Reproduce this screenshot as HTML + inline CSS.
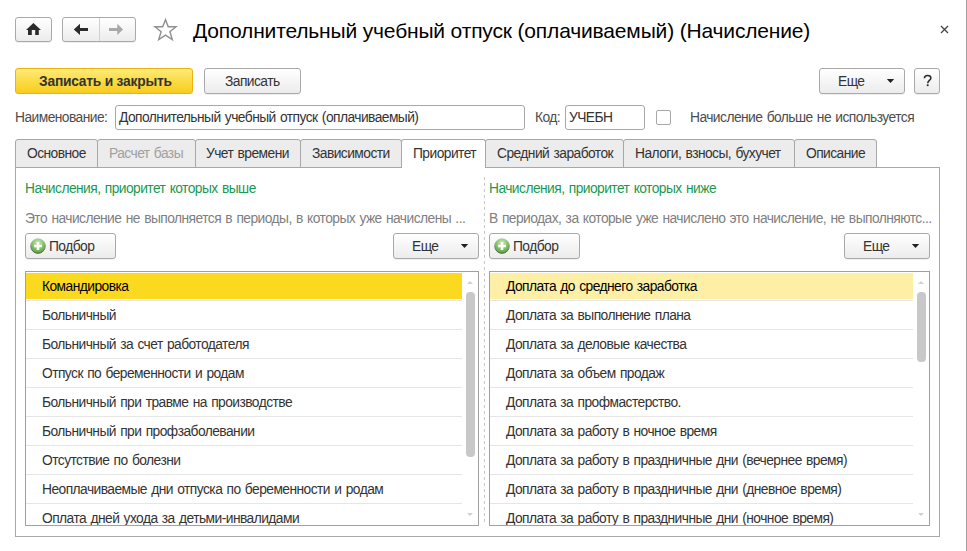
<!DOCTYPE html>
<html><head><meta charset="utf-8">
<style>
*{box-sizing:border-box;margin:0;padding:0}
html,body{width:967px;height:551px;overflow:hidden;background:#fff}
body{position:relative;font-family:"Liberation Sans",sans-serif;font-size:13.8px;letter-spacing:-0.55px;word-spacing:1px;color:#333}
.a{position:absolute;white-space:nowrap}
.btn{position:absolute;border:1px solid #a9a9a9;border-radius:3px;background:linear-gradient(#fff,#ececec);box-shadow:0 1px 0 rgba(0,0,0,0.06)}
.txt{position:absolute;white-space:nowrap;line-height:16px;padding-top:1px}
.tab{position:absolute;top:139px;height:29px;border:1px solid #a8a8a8;border-radius:3px 3px 0 0;background:#ececec;}
.tab span{position:absolute;top:6px;white-space:nowrap;line-height:16px}
.grid{position:absolute;border:1px solid #a0a0a0;background:#fff;overflow:hidden}
.row{position:absolute;left:0;height:29px;}
.row .sep{position:absolute;left:0;bottom:0;height:1px;background:#e6e6e6}
.row span{position:absolute;left:16px;top:7px;line-height:16px;white-space:nowrap}
.input{position:absolute;border:1px solid #a8a8a8;border-radius:3px;background:#fff}
.rows{position:absolute;left:0;top:0}
.row .bg{position:absolute;left:0;top:1px;right:0;height:26px}
.row .sep{top:28px;bottom:auto}
.sb{position:absolute;width:9px;background:#c8c8c8;border-radius:4px}
.up,.dn{position:absolute;width:0;height:0;border-left:3px solid transparent;border-right:3px solid transparent}
.up{border-bottom:3px solid #d0d0d0}
.dn{border-top:3px solid #d0d0d0}
</style></head><body>
<!-- right edge line -->
<div class="a" style="left:966px;top:0;width:1px;height:551px;background:#a0a0a0"></div>

<!-- home button -->
<div class="btn" style="left:15px;top:17px;width:37px;height:25px">
 <svg width="37" height="25" style="position:absolute;left:-1px;top:-1px" viewBox="0 0 37 25"><path d="M18.4 6 L26 13 H23.8 V18 H20.2 V13 H16.8 V18 H13 V13 H11 Z" fill="#2b2b2b"/></svg>
</div>
<!-- nav buttons -->
<div class="btn" style="left:62px;top:17px;width:74px;height:25px">
 <div style="position:absolute;left:36px;top:0;width:1px;height:23px;background:#cfcfcf"></div>
 <svg width="74" height="25" style="position:absolute;left:-1px;top:-1px" viewBox="0 0 74 25"><path d="M11.8 12.4 L18 6.8 V10.9 H26 V13.9 H18 V18 Z" fill="#2b2b2b"/><path d="M61 12.4 L55.3 6.8 V10.9 H47 V13.9 H55.3 V18 Z" fill="#a8a8a8"/></svg>
</div>
<!-- star -->
<svg class="a" style="left:153px;top:17px" width="25" height="25" viewBox="0 0 25 25"><path d="M12.5 2.7 L15.3 9.8 L23 9.8 L16.9 14.8 L19.3 22.6 L12.5 18.2 L5.7 22.6 L8.1 14.8 L2 9.8 L9.7 9.8 Z" fill="none" stroke="#8f8f8f" stroke-width="1.4" stroke-linejoin="miter"/></svg>
<!-- title -->
<div class="txt" style="left:193px;top:18px;font-size:21px;letter-spacing:-0.16px;word-spacing:0;line-height:24px;color:#000">Дополнительный учебный отпуск (оплачиваемый) (Начисление)</div>
<!-- close -->
<svg class="a" style="left:940px;top:25px" width="10" height="10" viewBox="0 0 10 10"><path d="M1 1 L8 8 M8 1 L1 8" stroke="#444" stroke-width="1.3"/></svg>

<!-- toolbar -->
<div class="a" style="left:15px;top:68px;width:178px;height:26px;border:1px solid #eeb20f;border-radius:3px;background:linear-gradient(#fdeb7a,#fbdc45 50%,#f8cc1e)"></div>
<div class="txt" style="left:39px;top:73px;font-weight:bold;letter-spacing:-0.22px;word-spacing:0;color:#333">Записать и закрыть</div>
<div class="btn" style="left:204px;top:68px;width:97px;height:26px"></div>
<div class="txt" style="left:225px;top:73px">Записать</div>

<div class="btn" style="left:819px;top:68px;width:86px;height:26px"></div>
<div class="txt" style="left:838px;top:73px">Еще</div>
<svg class="a" style="left:886px;top:78px" width="9" height="6" viewBox="0 0 9 6"><path d="M0.8 1 H8.2 L4.5 5 Z" fill="#222"/></svg>
<div class="btn" style="left:914px;top:68px;width:26px;height:26px"></div>
<svg class="a" style="left:914px;top:68px" width="26" height="26" viewBox="0 0 26 26"><path d="M10.4 10.3 C10.4 8.3 11.7 7.4 13.6 7.4 C15.6 7.4 16.9 8.5 16.9 10.1 C16.9 12.2 13.7 12.6 13.7 15.2" fill="none" stroke="#2b2b2b" stroke-width="1.5"/><circle cx="13.7" cy="17.2" r="1.05" fill="#2b2b2b"/></svg>

<!-- name row -->
<div class="txt" style="left:15px;top:109px;color:#4d4d4d">Наименование:</div>
<div class="input" style="left:115px;top:105px;width:410px;height:25px"></div>
<div class="txt" style="left:119px;top:109px">Дополнительный учебный отпуск (оплачиваемый)</div>
<div class="txt" style="left:535px;top:109px;color:#4d4d4d">Код:</div>
<div class="input" style="left:565px;top:105px;width:80px;height:25px"></div>
<div class="txt" style="left:569px;top:109px">УЧЕБН</div>
<div class="a" style="left:656px;top:110px;width:15px;height:15px;border:1px solid #a8a8a8;border-radius:2px;background:#fff"></div>
<div class="txt" style="left:690px;top:109px;color:#4d4d4d">Начисление больше не используется</div>

<!-- tabs -->
<div class="tab" style="left:15px;width:83px"><span style="left:11px">Основное</span></div>
<div class="tab" style="left:97px;width:99px"><span style="left:11px;color:#a0a0a0">Расчет базы</span></div>
<div class="tab" style="left:195px;width:106px"><span style="left:10px">Учет времени</span></div>
<div class="tab" style="left:300px;width:102px"><span style="left:11px">Зависимости</span></div>
<div class="tab" style="left:794px;width:83px"><span style="left:11px">Описание</span></div>
<div class="tab" style="left:623px;width:172px"><span style="left:11px">Налоги, взносы, бухучет</span></div>
<div class="tab" style="left:485px;width:139px"><span style="left:11px">Средний заработок</span></div>
<!-- panel -->
<div class="a" style="left:15px;top:167px;width:925px;height:370px;border:1px solid #a8a8a8;background:#fff"></div>
<div class="tab" style="left:401px;width:85px;background:#fff;border-bottom:none;height:29px"><span style="left:11px">Приоритет</span></div>

<!-- left column -->
<div class="txt" style="left:25px;top:180px;color:#1a9a50">Начисления, приоритет которых выше</div>
<div class="txt" style="left:25px;top:210px;color:#808080">Это начисление не выполняется в периоды, в которых уже начислены ...</div>
<div class="btn" style="left:25px;top:233px;width:91px;height:26px"></div>
<svg class="a" style="left:29px;top:237px" width="18" height="18" viewBox="0 0 18 18"><defs><radialGradient id="g29" cx="0.5" cy="0.3" r="0.75"><stop offset="0" stop-color="#d2ecc4"/><stop offset="0.5" stop-color="#86c668"/><stop offset="1" stop-color="#509e38"/></radialGradient><linearGradient id="s29" x1="0" y1="0" x2="0" y2="1"><stop offset="0" stop-color="#b8d4ae"/><stop offset="0.5" stop-color="#7f9477"/><stop offset="1" stop-color="#4a5448"/></linearGradient></defs><circle cx="9" cy="9" r="7.3" fill="url(#g29)" stroke="url(#s29)" stroke-width="1"/><path d="M5.1 7.75 H7.75 V4.9 H10.25 V7.75 H12.9 V10.25 H10.25 V13.1 H7.75 V10.25 H5.1 Z" fill="#fff"/></svg>
<div class="txt" style="left:49px;top:238px">Подбор</div>
<div class="btn" style="left:393px;top:233px;width:86px;height:26px"></div>
<div class="txt" style="left:412px;top:238px">Еще</div>
<svg class="a" style="left:460px;top:243px" width="9" height="6" viewBox="0 0 9 6"><path d="M0.8 1 H8.2 L4.5 5 Z" fill="#222"/></svg>

<!-- dotted separator -->
<div class="a" style="left:484px;top:177px;width:1px;height:348px;background:repeating-linear-gradient(#c8c8c8 0 3px,transparent 3px 6px)"></div>

<!-- right column -->
<div class="txt" style="left:489px;top:180px;color:#1a9a50">Начисления, приоритет которых ниже</div>
<div class="txt" style="left:489px;top:210px;color:#808080">В периодах, за которые уже начислено это начисление, не выполняютс...</div>
<div class="btn" style="left:489px;top:233px;width:91px;height:26px"></div>
<svg class="a" style="left:493px;top:237px" width="18" height="18" viewBox="0 0 18 18"><defs><radialGradient id="g493" cx="0.5" cy="0.3" r="0.75"><stop offset="0" stop-color="#d2ecc4"/><stop offset="0.5" stop-color="#86c668"/><stop offset="1" stop-color="#509e38"/></radialGradient><linearGradient id="s493" x1="0" y1="0" x2="0" y2="1"><stop offset="0" stop-color="#b8d4ae"/><stop offset="0.5" stop-color="#7f9477"/><stop offset="1" stop-color="#4a5448"/></linearGradient></defs><circle cx="9" cy="9" r="7.3" fill="url(#g493)" stroke="url(#s493)" stroke-width="1"/><path d="M5.1 7.75 H7.75 V4.9 H10.25 V7.75 H12.9 V10.25 H10.25 V13.1 H7.75 V10.25 H5.1 Z" fill="#fff"/></svg>
<div class="txt" style="left:513px;top:238px">Подбор</div>
<div class="btn" style="left:844px;top:233px;width:86px;height:26px"></div>
<div class="txt" style="left:863px;top:238px">Еще</div>
<svg class="a" style="left:911px;top:243px" width="9" height="6" viewBox="0 0 9 6"><path d="M0.8 1 H8.2 L4.5 5 Z" fill="#222"/></svg>

<!-- left grid -->
<div class="grid" style="left:25px;top:271px;width:454px;height:255px"><div class="rows">
<div class="row" style="top:0px;width:436px"><div class="bg" style="background:#fad91f;"></div><div class="sep" style="width:436px"></div><span style="color:#000">Командировка</span></div>
<div class="row" style="top:29px;width:436px"><div class="bg" style=""></div><div class="sep" style="width:436px"></div><span>Больничный</span></div>
<div class="row" style="top:58px;width:436px"><div class="bg" style=""></div><div class="sep" style="width:436px"></div><span>Больничный за счет работодателя</span></div>
<div class="row" style="top:87px;width:436px"><div class="bg" style=""></div><div class="sep" style="width:436px"></div><span>Отпуск по беременности и родам</span></div>
<div class="row" style="top:116px;width:436px"><div class="bg" style=""></div><div class="sep" style="width:436px"></div><span>Больничный при травме на производстве</span></div>
<div class="row" style="top:145px;width:436px"><div class="bg" style=""></div><div class="sep" style="width:436px"></div><span>Больничный при профзаболевании</span></div>
<div class="row" style="top:174px;width:436px"><div class="bg" style=""></div><div class="sep" style="width:436px"></div><span>Отсутствие по болезни</span></div>
<div class="row" style="top:203px;width:436px"><div class="bg" style=""></div><div class="sep" style="width:436px"></div><span>Неоплачиваемые дни отпуска по беременности и родам</span></div>
<div class="row" style="top:232px;width:436px"><div class="bg" style=""></div><div class="sep" style="width:436px"></div><span>Оплата дней ухода за детьми-инвалидами</span></div>
</div><div class="sb" style="left:440px;top:20px;height:165px"></div><div class="up" style="left:441px;top:9px"></div><div class="dn" style="left:441px;top:241px"></div></div>
<!-- right grid -->
<div class="grid" style="left:489px;top:271px;width:441px;height:255px"><div class="rows">
<div class="row" style="top:0px;width:423px"><div class="bg" style="background:#fdefa6;"></div><div class="sep" style="width:423px"></div><span style="color:#000">Доплата до среднего заработка</span></div>
<div class="row" style="top:29px;width:423px"><div class="bg" style=""></div><div class="sep" style="width:423px"></div><span>Доплата за выполнение плана</span></div>
<div class="row" style="top:58px;width:423px"><div class="bg" style=""></div><div class="sep" style="width:423px"></div><span>Доплата за деловые качества</span></div>
<div class="row" style="top:87px;width:423px"><div class="bg" style=""></div><div class="sep" style="width:423px"></div><span>Доплата за объем продаж</span></div>
<div class="row" style="top:116px;width:423px"><div class="bg" style=""></div><div class="sep" style="width:423px"></div><span>Доплата за профмастерство.</span></div>
<div class="row" style="top:145px;width:423px"><div class="bg" style=""></div><div class="sep" style="width:423px"></div><span>Доплата за работу в ночное время</span></div>
<div class="row" style="top:174px;width:423px"><div class="bg" style=""></div><div class="sep" style="width:423px"></div><span>Доплата за работу в праздничные дни (вечернее время)</span></div>
<div class="row" style="top:203px;width:423px"><div class="bg" style=""></div><div class="sep" style="width:423px"></div><span>Доплата за работу в праздничные дни (дневное время)</span></div>
<div class="row" style="top:232px;width:423px"><div class="bg" style=""></div><div class="sep" style="width:423px"></div><span>Доплата за работу в праздничные дни (ночное время)</span></div>
</div><div class="sb" style="left:427px;top:20px;height:70px"></div><div class="up" style="left:428px;top:9px"></div><div class="dn" style="left:428px;top:241px"></div></div>
</body></html>
